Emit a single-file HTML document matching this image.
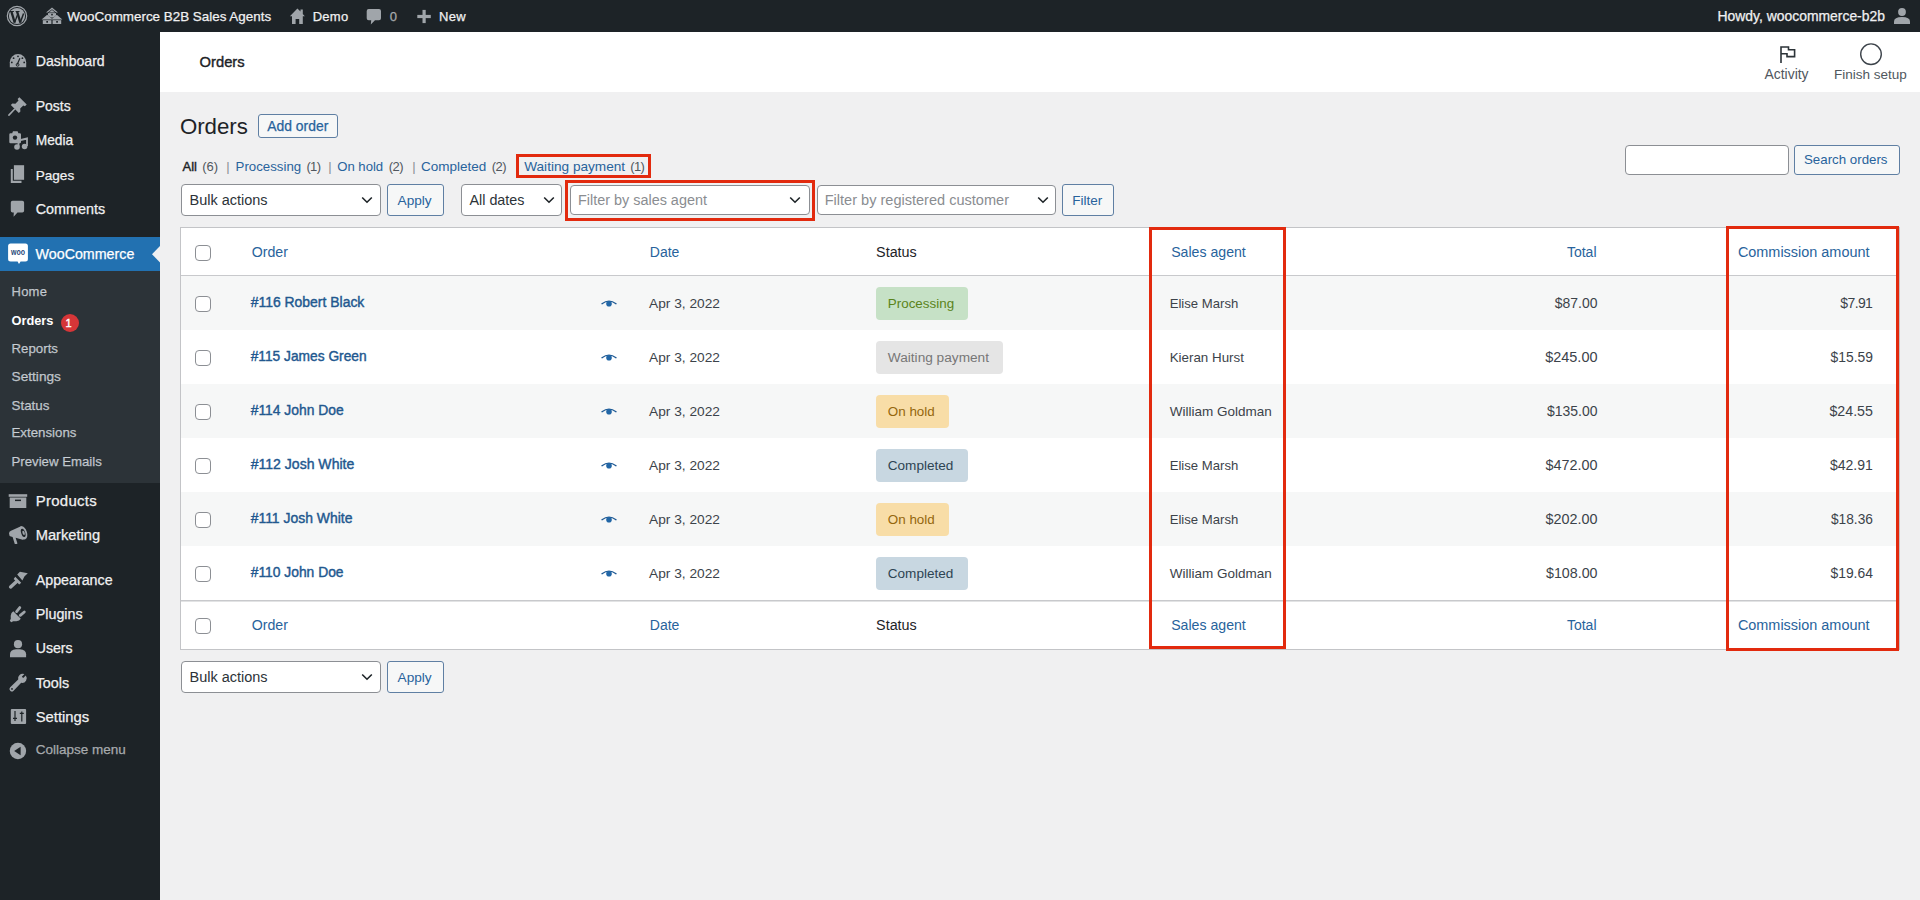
<!DOCTYPE html>
<html><head><meta charset="utf-8"><title>Orders</title>
<style>
html,body{margin:0;padding:0;width:1920px;height:900px;overflow:hidden;background:#f0f0f1;font-family:"Liberation Sans", sans-serif;}
.t{position:absolute;white-space:nowrap;}
svg{position:absolute;}
</style></head><body>
<div style="position:absolute;left:0px;top:0px;width:1920px;height:32px;background:#1d2327"></div>
<div style="position:absolute;left:0px;top:32px;width:160px;height:868px;background:#1d2327"></div>
<div style="position:absolute;left:160px;top:32px;width:1760px;height:60px;background:#fff"></div>
<div style="position:absolute;left:0px;top:237px;width:160px;height:34px;background:#2271b1"></div>
<div style="position:absolute;left:0px;top:271px;width:160px;height:212px;background:#2c3338"></div>
<div style="position:absolute;left:258px;top:114px;width:80px;height:24px;box-sizing:border-box;border:1px solid #5f7fa3;border-radius:3px;background:#f6f7f7"></div>
<div style="position:absolute;left:1625px;top:145px;width:164px;height:30px;box-sizing:border-box;border:1px solid #8c8f94;border-radius:4px;background:#fff"></div>
<div style="position:absolute;left:1794px;top:145px;width:106px;height:30px;box-sizing:border-box;border:1px solid #5f7fa3;border-radius:3px;background:#f6f7f7"></div>
<div style="position:absolute;left:181px;top:184px;width:200px;height:32px;box-sizing:border-box;border:1px solid #8c8f94;border-radius:4px;background:#fff"></div>
<svg style="left:361px;top:196.0px" width="12" height="8" viewBox="0 0 12 8"><path d="M1.2 1.5 L6 6.2 L10.8 1.5" fill="none" stroke="#1d2327" stroke-width="1.6"/></svg>
<div style="position:absolute;left:387px;top:184px;width:57px;height:32px;box-sizing:border-box;border:1px solid #5f7fa3;border-radius:3px;background:#f6f7f7"></div>
<div style="position:absolute;left:461px;top:184px;width:101px;height:32px;box-sizing:border-box;border:1px solid #8c8f94;border-radius:4px;background:#fff"></div>
<svg style="left:542.5px;top:196.0px" width="12" height="8" viewBox="0 0 12 8"><path d="M1.2 1.5 L6 6.2 L10.8 1.5" fill="none" stroke="#1d2327" stroke-width="1.6"/></svg>
<div style="position:absolute;left:570px;top:185px;width:240px;height:30px;box-sizing:border-box;border:1px solid #8c8f94;border-radius:4px;background:#fff"></div>
<svg style="left:789px;top:196.0px" width="12" height="8" viewBox="0 0 12 8"><path d="M1.2 1.5 L6 6.2 L10.8 1.5" fill="none" stroke="#1d2327" stroke-width="1.6"/></svg>
<div style="position:absolute;left:817px;top:185px;width:239px;height:30px;box-sizing:border-box;border:1px solid #8c8f94;border-radius:4px;background:#fff"></div>
<svg style="left:1036.5px;top:196.0px" width="12" height="8" viewBox="0 0 12 8"><path d="M1.2 1.5 L6 6.2 L10.8 1.5" fill="none" stroke="#1d2327" stroke-width="1.6"/></svg>
<div style="position:absolute;left:1062px;top:184px;width:52px;height:32px;box-sizing:border-box;border:1px solid #5f7fa3;border-radius:3px;background:#f6f7f7"></div>
<div style="position:absolute;left:181px;top:661px;width:200px;height:32px;box-sizing:border-box;border:1px solid #8c8f94;border-radius:4px;background:#fff"></div>
<svg style="left:361px;top:673.0px" width="12" height="8" viewBox="0 0 12 8"><path d="M1.2 1.5 L6 6.2 L10.8 1.5" fill="none" stroke="#1d2327" stroke-width="1.6"/></svg>
<div style="position:absolute;left:387px;top:661px;width:57px;height:32px;box-sizing:border-box;border:1px solid #5f7fa3;border-radius:3px;background:#f6f7f7"></div>
<div style="position:absolute;left:180px;top:227px;width:1720px;height:423px;box-sizing:border-box;border:1px solid #c3c4c7;background:#fff"></div>
<div style="position:absolute;left:181px;top:275px;width:1718px;height:1px;background:#c8c9cc"></div>
<div style="position:absolute;left:181px;top:276px;width:1718px;height:1px;background:#e2e3e4"></div>
<div style="position:absolute;left:181px;top:600px;width:1718px;height:1px;background:#c8c9cc"></div>
<div style="position:absolute;left:181px;top:601px;width:1718px;height:1px;background:#e2e3e4"></div>
<div style="position:absolute;left:195px;top:245px;width:16px;height:16px;box-sizing:border-box;border:1px solid #8c8f94;border-radius:4px;background:#fff"></div>
<div style="position:absolute;left:195px;top:618px;width:16px;height:16px;box-sizing:border-box;border:1px solid #8c8f94;border-radius:4px;background:#fff"></div>
<div style="position:absolute;left:181px;top:276px;width:1718px;height:54px;background:#f6f7f7"></div>
<div style="position:absolute;left:195px;top:296px;width:16px;height:16px;box-sizing:border-box;border:1px solid #8c8f94;border-radius:4px;background:#fff"></div>
<svg style="left:600px;top:298px" width="18" height="10" viewBox="0 0 18 10"><path d="M2 5.7 Q9 0.5 16 5.7" fill="none" stroke="#1f5a94" stroke-width="1.4" stroke-linecap="round"/><circle cx="9" cy="5.7" r="2.8" fill="#2166a6"/></svg>
<div style="position:absolute;left:876px;top:287px;width:92px;height:33px;background:#c6e1c6;border-radius:4px"></div>
<div style="position:absolute;left:195px;top:350px;width:16px;height:16px;box-sizing:border-box;border:1px solid #8c8f94;border-radius:4px;background:#fff"></div>
<svg style="left:600px;top:352px" width="18" height="10" viewBox="0 0 18 10"><path d="M2 5.7 Q9 0.5 16 5.7" fill="none" stroke="#1f5a94" stroke-width="1.4" stroke-linecap="round"/><circle cx="9" cy="5.7" r="2.8" fill="#2166a6"/></svg>
<div style="position:absolute;left:876px;top:341px;width:127px;height:33px;background:#e5e5e5;border-radius:4px"></div>
<div style="position:absolute;left:181px;top:384px;width:1718px;height:54px;background:#f6f7f7"></div>
<div style="position:absolute;left:195px;top:404px;width:16px;height:16px;box-sizing:border-box;border:1px solid #8c8f94;border-radius:4px;background:#fff"></div>
<svg style="left:600px;top:406px" width="18" height="10" viewBox="0 0 18 10"><path d="M2 5.7 Q9 0.5 16 5.7" fill="none" stroke="#1f5a94" stroke-width="1.4" stroke-linecap="round"/><circle cx="9" cy="5.7" r="2.8" fill="#2166a6"/></svg>
<div style="position:absolute;left:876px;top:395px;width:73px;height:33px;background:#f8dda7;border-radius:4px"></div>
<div style="position:absolute;left:195px;top:458px;width:16px;height:16px;box-sizing:border-box;border:1px solid #8c8f94;border-radius:4px;background:#fff"></div>
<svg style="left:600px;top:460px" width="18" height="10" viewBox="0 0 18 10"><path d="M2 5.7 Q9 0.5 16 5.7" fill="none" stroke="#1f5a94" stroke-width="1.4" stroke-linecap="round"/><circle cx="9" cy="5.7" r="2.8" fill="#2166a6"/></svg>
<div style="position:absolute;left:876px;top:449px;width:92px;height:33px;background:#c8d7e1;border-radius:4px"></div>
<div style="position:absolute;left:181px;top:492px;width:1718px;height:54px;background:#f6f7f7"></div>
<div style="position:absolute;left:195px;top:512px;width:16px;height:16px;box-sizing:border-box;border:1px solid #8c8f94;border-radius:4px;background:#fff"></div>
<svg style="left:600px;top:514px" width="18" height="10" viewBox="0 0 18 10"><path d="M2 5.7 Q9 0.5 16 5.7" fill="none" stroke="#1f5a94" stroke-width="1.4" stroke-linecap="round"/><circle cx="9" cy="5.7" r="2.8" fill="#2166a6"/></svg>
<div style="position:absolute;left:876px;top:503px;width:73px;height:33px;background:#f8dda7;border-radius:4px"></div>
<div style="position:absolute;left:195px;top:566px;width:16px;height:16px;box-sizing:border-box;border:1px solid #8c8f94;border-radius:4px;background:#fff"></div>
<svg style="left:600px;top:568px" width="18" height="10" viewBox="0 0 18 10"><path d="M2 5.7 Q9 0.5 16 5.7" fill="none" stroke="#1f5a94" stroke-width="1.4" stroke-linecap="round"/><circle cx="9" cy="5.7" r="2.8" fill="#2166a6"/></svg>
<div style="position:absolute;left:876px;top:557px;width:92px;height:33px;background:#c8d7e1;border-radius:4px"></div>
<svg style="left:0;top:0" width="1920" height="900" viewBox="0 0 1920 900">
<g fill="#a0a5aa">
 <!-- WP logo -->
 <circle cx="17" cy="16" r="9.7" fill="none" stroke="#a0a5aa" stroke-width="1.2"/>
 <circle cx="17" cy="16" r="8.1"/>
 <g stroke="#1d2327" fill="none" stroke-linecap="butt">
  <path d="M11.4 11.6 L14.7 22.6" stroke-width="2.3"/>
  <path d="M14.6 22.6 L17.3 15.2" stroke-width="1.3"/>
  <path d="M17.1 11.6 L20.4 22.6" stroke-width="2.3"/>
  <path d="M20.3 22.6 L23.6 13.6" stroke-width="1.5"/>
  <path d="M9.9 11.5 H13.9 M15.6 11.5 H19.5" stroke-width="1"/>
 </g>
 <!-- my sites houses -->
 <path d="M46 12.4 L52 7.6 L58 12.4 L56.2 12.4 L52 9.2 L47.8 12.4 Z"/>
 <path d="M48.8 12.4 L52 9.9 L55.2 12.4 Z"/>
 <rect x="48" y="13.1" width="8" height="4.4"/>
 <rect x="51.2" y="13.8" width="1.6" height="1.6" fill="#1d2327"/>
 <path d="M41.3 19.7 L47.2 14.7 L52 18.8 L56.8 14.7 L62.7 19.7 L62.7 22 L41.3 22 Z" fill="#1d2327"/>
 <path d="M41.6 19.5 L47.2 14.8 L52.8 19.5 Z M51.2 19.5 L56.8 14.8 L62.4 19.5 Z"/>
 <rect x="42.8" y="20.2" width="8.6" height="3.8"/>
 <rect x="52.6" y="20.2" width="8.6" height="3.8"/>
 <rect x="46.3" y="21" width="1.7" height="1.7" fill="#1d2327"/>
 <rect x="56.2" y="21" width="1.7" height="1.7" fill="#1d2327"/>
 <!-- home -->
 <path d="M289.9 16.2 L297.4 8.5 L300.5 11.6 L300.5 9.5 L302.8 9.5 L302.8 14 L304.8 16.2 L302.8 16.2 L302.8 24 L292 24 L292 16.2 Z"/>
 <rect x="295.6" y="19" width="3.6" height="5" fill="#1d2327"/>
 <!-- comment -->
 <path d="M368.7 8.9 H379 Q381 8.9 381 10.9 V18.3 Q381 20.3 379 20.3 H375 L370.8 24.5 L371.2 20.3 H368.7 Q366.7 20.3 366.7 18.3 V10.9 Q366.7 8.9 368.7 8.9 Z"/>
 <!-- plus -->
 <rect x="422.5" y="9.9" width="3.2" height="13.2"/>
 <rect x="417.3" y="14.9" width="13.5" height="3.2"/>
 <!-- user avatar -->
 <circle cx="1902" cy="12" r="3.9"/>
 <path d="M1894 24 V21.5 Q1894 17 1902 17 Q1910 17 1910 21.5 V24 Z"/>

 <!-- Dashboard -->
 <path d="M9.8 67.3 V62.2 A8.2 8.2 0 0 1 26.2 62.2 V67.3 Z"/>
 <g fill="#1d2327"><circle cx="18" cy="56.3" r="0.9"/><circle cx="13.6" cy="58.2" r="0.9"/><circle cx="22.4" cy="58.2" r="0.9"/><circle cx="11.8" cy="62.4" r="0.9"/><circle cx="24.2" cy="62.4" r="0.9"/></g>
 <path d="M17.2 64.6 L19.9 58.2" stroke="#1d2327" stroke-width="1.2"/>
 <circle cx="17.6" cy="64.8" r="1.4" fill="none" stroke="#1d2327" stroke-width="1"/>
 <!-- Posts pin -->
 <path d="M19.4 97.2 L26.7 104.5 L24.9 106.3 L23.3 105.4 L20.2 108.5 L20.4 111.5 L18.8 113.1 L10.8 105.1 L12.4 103.5 L15.4 103.7 L18.5 100.6 L17.6 99 Z"/>
 <path d="M14.5 109.3 L8.9 115.1" stroke="#a0a5aa" stroke-width="1.6" stroke-linecap="round"/>
 <!-- Media -->
 <path d="M10.5 133.2 H12.2 L13 131.2 H17.6 L18.4 133.2 H19.8 Q21 133.2 21 134.4 V142 Q21 143.2 19.8 143.2 H10.5 Q9.3 143.2 9.3 142 V134.4 Q9.3 133.2 10.5 133.2 Z"/>
 <circle cx="15" cy="137.6" r="2.2" fill="#1d2327"/>
 <path d="M18.5 146.5 V140.5 L27 138.5 V146" stroke="#a0a5aa" stroke-width="1.8" fill="none"/>
 <circle cx="17" cy="147" r="2.8"/>
 <circle cx="24.6" cy="146.5" r="2.8"/>
 <!-- Pages -->
 <path d="M10.8 169 H12.8 V180.8 H21.5 V182.9 H10.8 Z"/>
 <rect x="13.9" y="165.2" width="10.2" height="14.6"/>
 <!-- Comments -->
 <path d="M12.6 200.7 H22.3 Q24.1 200.7 24.1 202.5 V210.8 Q24.1 212.6 22.3 212.6 H17.5 L13.6 216.8 L13.8 212.6 H12.6 Q10.8 212.6 10.8 210.8 V202.5 Q10.8 200.7 12.6 200.7 Z"/>
 <!-- Products -->
 <rect x="8.7" y="494.2" width="18.5" height="2.6"/>
 <rect x="9.7" y="497.5" width="16.6" height="10.5"/>
 <rect x="15" y="499.6" width="6" height="1.5" fill="#1d2327"/>
 <!-- Marketing megaphone -->
 <path d="M9 533.5 Q9 531.3 11 530.8 L21.5 526 L23.5 540 L15.6 537.8 L17.4 543.3 Q17.5 544.1 16.6 544.1 H14.8 L12.6 537 L11 536.6 Q9 536 9 533.5 Z"/>
 <ellipse cx="23.2" cy="532.8" rx="3.8" ry="6.8" transform="rotate(-18 23.2 532.8)"/>
 <ellipse cx="23.2" cy="532.8" rx="2" ry="4.3" transform="rotate(-18 23.2 532.8)" fill="#1d2327"/>
 <ellipse cx="23.6" cy="532.8" rx="1.1" ry="2.2" transform="rotate(-18 23.6 532.8)"/>
 <!-- Appearance brush -->
 <path d="M17.2 574.6 L19.9 571.7 L27.8 573.2 L24.4 576.4 L22.4 580.4 Z"/>
 <path d="M15.3 576.8 L21.2 582.7 L19.2 584.4 L13.7 578.9 Z"/>
 <path d="M16.6 581.4 L10.6 586.9" stroke="#a0a5aa" stroke-width="3.4" stroke-linecap="round"/>
 <path d="M16.4 575.8 L22 581.4" stroke="#1d2327" stroke-width="1"/>
 <!-- Plugins -->
 <path d="M13.3 611.3 L20.8 618.8 Q19.5 621 16.3 621.3 L13.2 621.2 L11.2 622.2 L9.8 620.8 L10.8 618.8 L10.7 615.7 Q11 612.5 13.3 611.3 Z"/>
 <path d="M16.6 611.6 L19.8 607.6 M20.3 615.3 L24.3 612" stroke="#a0a5aa" stroke-width="2.8" stroke-linecap="round"/>
 <!-- Users -->
 <circle cx="18" cy="644.2" r="4.1"/>
 <path d="M10 657.2 V654.2 Q10 649.5 16 649.2 H20 Q26.1 649.5 26.1 654.2 V657.2 Z"/>
 <!-- Tools wrench -->
 <path d="M25.8 675.5 L23.2 678.1 L21.8 676.7 L24.4 674.1 A4.6 4.6 0 0 0 18.2 679.6 L10.2 687.3 A2.4 2.4 0 0 0 13.6 690.7 L21.2 682.8 A4.6 4.6 0 0 0 25.8 675.5 Z"/>
 <circle cx="12" cy="688.9" r="0.9" fill="#1d2327"/>
 <!-- Settings -->
 <rect x="10.8" y="708.9" width="15.3" height="15" rx="1"/>
 <path d="M15 711 V721 M21.8 711.5 V721.5 M13 718.3 H17 M19.8 713.3 H23.8" stroke="#1d2327" stroke-width="1.2"/>
 <!-- Collapse -->
 <circle cx="17.95" cy="751" r="8.2"/>
 <path d="M14.2 751 L20.6 746.8 V755.2 Z" fill="#1d2327"/>

 <!-- Woo logo -->
 <path d="M10.5 243.6 H25.4 Q27.9 243.6 27.9 246.1 V259.1 Q27.9 261.6 25.4 261.6 H20.6 L19 263.9 L17.6 261.6 H10.6 Q8.1 261.6 8.1 259.1 V246.1 Q8.1 243.6 10.6 243.6 Z" fill="#fff"/>
 <!-- sidebar arrow -->
 <path d="M160 246 L152 254.3 L160 262.6 Z" fill="#f0f0f1"/>

 <!-- Activity flag -->
 <path d="M1781 63 V47 H1788.5 V49.8 H1794.6 V56.6 H1787 V53.8 H1781" fill="none" stroke="#2c3338" stroke-width="1.6"/>
 <circle cx="1871" cy="54.2" r="10.3" fill="none" stroke="#3c434a" stroke-width="1.4"/>
</g>
<text x="11" y="255.4" font-family="Liberation Sans" font-size="9.6" font-weight="700" fill="#2a4a7a" textLength="14" lengthAdjust="spacingAndGlyphs">woo</text>
</svg>
<div style="position:absolute;left:60.5px;top:313.5px;width:18px;height:18px;border-radius:9px;background:#d63638"></div>
<div class="t" style="top:7.85px;left:67.2px;font-size:13.41px;line-height:17px;color:#f0f0f1;font-weight:400;-webkit-text-stroke:0.25px #f0f0f1">WooCommerce B2B Sales Agents</div>
<div class="t" style="top:8.50px;left:312.7px;font-size:13.0px;line-height:16px;color:#f0f0f1;font-weight:400;-webkit-text-stroke:0.25px #f0f0f1;letter-spacing:0.271px">Demo</div>
<div class="t" style="top:8.50px;left:389.8px;font-size:13.0px;line-height:16px;color:#a7aaad;font-weight:400;-webkit-text-stroke:0.25px #a7aaad">0</div>
<div class="t" style="top:8.50px;left:439.09999999999997px;font-size:13.0px;line-height:16px;color:#f0f0f1;font-weight:400;-webkit-text-stroke:0.25px #f0f0f1;letter-spacing:0.292px">New</div>
<div class="t" style="top:7.68px;left:1717.5px;font-size:13.91px;line-height:17px;color:#f0f0f1;font-weight:400;-webkit-text-stroke:0.25px #f0f0f1">Howdy, woocommerce-b2b</div>
<div class="t" style="top:52.81px;left:35.7px;font-size:14.12px;line-height:17px;color:#f0f0f1;font-weight:400;-webkit-text-stroke:0.25px #f0f0f1">Dashboard</div>
<div class="t" style="top:98.05px;left:35.7px;font-size:13.99px;line-height:17px;color:#f0f0f1;font-weight:400;-webkit-text-stroke:0.25px #f0f0f1">Posts</div>
<div class="t" style="top:132.33px;left:35.7px;font-size:13.76px;line-height:17px;color:#f0f0f1;font-weight:400;-webkit-text-stroke:0.25px #f0f0f1">Media</div>
<div class="t" style="top:166.59px;left:35.7px;font-size:13.58px;line-height:17px;color:#f0f0f1;font-weight:400;-webkit-text-stroke:0.25px #f0f0f1">Pages</div>
<div class="t" style="top:200.42px;left:35.7px;font-size:14.37px;line-height:18px;color:#f0f0f1;font-weight:400;-webkit-text-stroke:0.25px #f0f0f1">Comments</div>
<div class="t" style="top:244.56px;left:35.6px;font-size:14.26px;line-height:18px;color:#fff;font-weight:400;-webkit-text-stroke:0.25px #fff">WooCommerce</div>
<div class="t" style="top:284.40px;left:11.5px;font-size:13.0px;line-height:16px;color:rgba(240,246,252,.7);font-weight:400;-webkit-text-stroke:0.25px rgba(240,246,252,.7);letter-spacing:0.237px">Home</div>
<div class="t" style="top:312.66px;left:11.5px;font-size:12.8px;line-height:16px;color:#fff;font-weight:700">Orders</div>
<div class="t" style="top:340.70px;left:11.5px;font-size:13.28px;line-height:16px;color:rgba(240,246,252,.7);font-weight:400;-webkit-text-stroke:0.25px rgba(240,246,252,.7)">Reports</div>
<div class="t" style="top:368.25px;left:11.5px;font-size:13.7px;line-height:17px;color:rgba(240,246,252,.7);font-weight:400;-webkit-text-stroke:0.25px rgba(240,246,252,.7)">Settings</div>
<div class="t" style="top:396.56px;left:11.5px;font-size:13.4px;line-height:17px;color:rgba(240,246,252,.7);font-weight:400;-webkit-text-stroke:0.25px rgba(240,246,252,.7)">Status</div>
<div class="t" style="top:425.30px;left:11.5px;font-size:13.29px;line-height:16px;color:rgba(240,246,252,.7);font-weight:400;-webkit-text-stroke:0.25px rgba(240,246,252,.7)">Extensions</div>
<div class="t" style="top:453.52px;left:11.5px;font-size:13.23px;line-height:16px;color:rgba(240,246,252,.7);font-weight:400;-webkit-text-stroke:0.25px rgba(240,246,252,.7)">Preview Emails</div>
<div class="t" style="top:491.61px;left:35.7px;font-size:14.98px;line-height:18px;color:#f0f0f1;font-weight:400;-webkit-text-stroke:0.25px #f0f0f1;letter-spacing:0.269px">Products</div>
<div class="t" style="top:525.51px;left:35.7px;font-size:14.69px;line-height:18px;color:#f0f0f1;font-weight:400;-webkit-text-stroke:0.25px #f0f0f1">Marketing</div>
<div class="t" style="top:571.45px;left:35.7px;font-size:14.28px;line-height:18px;color:#f0f0f1;font-weight:400;-webkit-text-stroke:0.25px #f0f0f1">Appearance</div>
<div class="t" style="top:605.23px;left:35.7px;font-size:14.33px;line-height:18px;color:#f0f0f1;font-weight:400;-webkit-text-stroke:0.25px #f0f0f1">Plugins</div>
<div class="t" style="top:639.49px;left:35.7px;font-size:14.17px;line-height:18px;color:#f0f0f1;font-weight:400;-webkit-text-stroke:0.25px #f0f0f1">Users</div>
<div class="t" style="top:673.93px;left:35.7px;font-size:14.35px;line-height:18px;color:#f0f0f1;font-weight:400;-webkit-text-stroke:0.25px #f0f0f1">Tools</div>
<div class="t" style="top:707.57px;left:35.7px;font-size:14.8px;line-height:18px;color:#f0f0f1;font-weight:400;-webkit-text-stroke:0.25px #f0f0f1">Settings</div>
<div class="t" style="top:741.43px;left:35.7px;font-size:13.49px;line-height:17px;color:#a7aaad;font-weight:400;-webkit-text-stroke:0.25px #a7aaad">Collapse menu</div>
<div class="t" style="top:52.60px;left:199.6px;font-size:14.72px;line-height:18px;color:#1d2327;font-weight:400;-webkit-text-stroke:0.4px #1d2327">Orders</div>
<div class="t" style="top:65.58px;left:1764.5px;font-size:13.91px;line-height:17px;color:#50575e;font-weight:400">Activity</div>
<div class="t" style="top:65.72px;left:1833.9px;font-size:13.52px;line-height:17px;color:#50575e;font-weight:400">Finish setup</div>
<div class="t" style="top:112.79px;left:179.89999999999998px;font-size:22.25px;line-height:27px;color:#1d2327;font-weight:400">Orders</div>
<div class="t" style="top:118.18px;left:267.2px;font-size:13.91px;line-height:17px;color:#28639c;font-weight:400;-webkit-text-stroke:0.25px #28639c">Add order</div>
<div class="t" style="top:159.00px;left:182.5px;font-size:13.0px;line-height:16px;color:#1d2327;font-weight:400;-webkit-text-stroke:0.4px #1d2327">All</div>
<div class="t" style="top:159.00px;left:202.2px;font-size:13.0px;line-height:16px;color:#50575e;font-weight:400">(6)</div>
<div class="t" style="top:159.00px;left:226.2px;font-size:13px;line-height:16px;color:#8c8f94;font-weight:400">|</div>
<div class="t" style="top:158.91px;left:235.6px;font-size:13.26px;line-height:16px;color:#28639c;font-weight:400">Processing</div>
<div class="t" style="top:159.00px;left:306.4px;font-size:13.0px;line-height:16px;color:#50575e;font-weight:400;letter-spacing:-0.6px">(1)</div>
<div class="t" style="top:159.00px;left:328.2px;font-size:13px;line-height:16px;color:#8c8f94;font-weight:400">|</div>
<div class="t" style="top:158.95px;left:337.2px;font-size:13.13px;line-height:16px;color:#28639c;font-weight:400">On hold</div>
<div class="t" style="top:159.00px;left:388.7px;font-size:13.0px;line-height:16px;color:#50575e;font-weight:400;letter-spacing:-0.495px">(2)</div>
<div class="t" style="top:159.00px;left:412.2px;font-size:13px;line-height:16px;color:#8c8f94;font-weight:400">|</div>
<div class="t" style="top:158.32px;left:421.09999999999997px;font-size:13.5px;line-height:17px;color:#28639c;font-weight:400">Completed</div>
<div class="t" style="top:159.00px;left:491.7px;font-size:13.0px;line-height:16px;color:#50575e;font-weight:400;letter-spacing:-0.495px">(2)</div>
<div class="t" style="top:158.28px;left:524.2px;font-size:13.63px;line-height:17px;color:#28639c;font-weight:400">Waiting payment</div>
<div class="t" style="top:159.00px;left:630.2px;font-size:13.0px;line-height:16px;color:#50575e;font-weight:400;letter-spacing:-0.6px">(1)</div>
<div class="t" style="top:152.49px;left:1804.0px;font-size:13.31px;line-height:16px;color:#28639c;font-weight:400">Search orders</div>
<div class="t" style="top:190.99px;left:189.5px;font-size:14.47px;line-height:18px;color:#2c3338;font-weight:400">Bulk actions</div>
<div class="t" style="top:191.78px;left:397.59999999999997px;font-size:13.63px;line-height:17px;color:#28639c;font-weight:400">Apply</div>
<div class="t" style="top:191.03px;left:469.5px;font-size:14.34px;line-height:18px;color:#2c3338;font-weight:400">All dates</div>
<div class="t" style="top:191.01px;left:578.0px;font-size:14.41px;line-height:18px;color:#8a8d91;font-weight:400">Filter by sales agent</div>
<div class="t" style="top:190.96px;left:824.7px;font-size:14.55px;line-height:18px;color:#8a8d91;font-weight:400">Filter by registered customer</div>
<div class="t" style="top:191.82px;left:1072.2px;font-size:13.5px;line-height:17px;color:#28639c;font-weight:400">Filter</div>
<div class="t" style="top:667.89px;left:189.5px;font-size:14.47px;line-height:18px;color:#2c3338;font-weight:400">Bulk actions</div>
<div class="t" style="top:668.78px;left:397.59999999999997px;font-size:13.63px;line-height:17px;color:#28639c;font-weight:400">Apply</div>
<div class="t" style="top:243.09px;left:251.7px;font-size:14.18px;line-height:18px;color:#28639c;font-weight:400">Order</div>
<div class="t" style="top:243.65px;left:649.8000000000001px;font-size:14.0px;line-height:17px;color:#28639c;font-weight:400">Date</div>
<div class="t" style="top:243.03px;left:876.1px;font-size:14.35px;line-height:18px;color:#1d2327;font-weight:400">Status</div>
<div class="t" style="top:243.60px;left:1171.2px;font-size:14.14px;line-height:17px;color:#28639c;font-weight:400">Sales agent</div>
<div class="t" style="top:243.65px;right:323.50px;font-size:14px;line-height:17px;color:#28639c;font-weight:400">Total</div>
<div class="t" style="top:243.00px;left:1737.9px;font-size:14.44px;line-height:18px;color:#28639c;font-weight:400">Commission amount</div>
<div class="t" style="top:616.09px;left:251.7px;font-size:14.18px;line-height:18px;color:#28639c;font-weight:400">Order</div>
<div class="t" style="top:616.65px;left:649.8000000000001px;font-size:14.0px;line-height:17px;color:#28639c;font-weight:400">Date</div>
<div class="t" style="top:616.03px;left:876.1px;font-size:14.35px;line-height:18px;color:#1d2327;font-weight:400">Status</div>
<div class="t" style="top:616.60px;left:1171.2px;font-size:14.14px;line-height:17px;color:#28639c;font-weight:400">Sales agent</div>
<div class="t" style="top:616.65px;right:323.50px;font-size:14px;line-height:17px;color:#28639c;font-weight:400">Total</div>
<div class="t" style="top:616.00px;left:1737.9px;font-size:14.44px;line-height:18px;color:#28639c;font-weight:400">Commission amount</div>
<div class="t" style="top:293.97px;left:250.7px;font-size:13.95px;line-height:17px;color:#22588f;font-weight:400;-webkit-text-stroke:0.4px #22588f">#116 Robert Black</div>
<div class="t" style="top:295.06px;left:649.1px;font-size:13.69px;line-height:17px;color:#3c434a;font-weight:400">Apr 3, 2022</div>
<div class="t" style="top:295.15px;left:887.8000000000001px;font-size:13.42px;line-height:17px;color:#5b841b;font-weight:400">Processing</div>
<div class="t" style="top:295.74px;left:1169.7px;font-size:13.15px;line-height:16px;color:#3c434a;font-weight:400">Elise Marsh</div>
<div class="t" style="top:294.96px;right:322.50px;font-size:13.96px;line-height:17px;color:#3c434a;font-weight:400">$87.00</div>
<div class="t" style="top:294.95px;right:47.70px;font-size:14.0px;line-height:17px;color:#3c434a;font-weight:400;letter-spacing:-0.6px">$7.91</div>
<div class="t" style="top:348.03px;left:250.7px;font-size:13.76px;line-height:17px;color:#22588f;font-weight:400;-webkit-text-stroke:0.4px #22588f">#115 James Green</div>
<div class="t" style="top:349.06px;left:649.1px;font-size:13.69px;line-height:17px;color:#3c434a;font-weight:400">Apr 3, 2022</div>
<div class="t" style="top:349.07px;left:887.8000000000001px;font-size:13.66px;line-height:17px;color:#777777;font-weight:400">Waiting payment</div>
<div class="t" style="top:349.17px;left:1169.7px;font-size:13.37px;line-height:17px;color:#3c434a;font-weight:400">Kieran Hurst</div>
<div class="t" style="top:348.29px;right:322.50px;font-size:14.47px;line-height:18px;color:#3c434a;font-weight:400">$245.00</div>
<div class="t" style="top:349.00px;right:47.10px;font-size:13.86px;line-height:17px;color:#3c434a;font-weight:400">$15.59</div>
<div class="t" style="top:402.00px;left:250.7px;font-size:13.86px;line-height:17px;color:#22588f;font-weight:400;-webkit-text-stroke:0.4px #22588f">#114 John Doe</div>
<div class="t" style="top:403.06px;left:649.1px;font-size:13.69px;line-height:17px;color:#3c434a;font-weight:400">Apr 3, 2022</div>
<div class="t" style="top:403.15px;left:887.8000000000001px;font-size:13.41px;line-height:17px;color:#94660c;font-weight:400">On hold</div>
<div class="t" style="top:403.12px;left:1169.7px;font-size:13.5px;line-height:17px;color:#3c434a;font-weight:400">William Goldman</div>
<div class="t" style="top:402.96px;right:322.50px;font-size:13.97px;line-height:17px;color:#3c434a;font-weight:400">$135.00</div>
<div class="t" style="top:402.37px;right:47.10px;font-size:14.22px;line-height:18px;color:#3c434a;font-weight:400">$24.55</div>
<div class="t" style="top:455.93px;left:250.7px;font-size:14.05px;line-height:17px;color:#22588f;font-weight:400;-webkit-text-stroke:0.4px #22588f">#112 Josh White</div>
<div class="t" style="top:457.06px;left:649.1px;font-size:13.69px;line-height:17px;color:#3c434a;font-weight:400">Apr 3, 2022</div>
<div class="t" style="top:457.10px;left:887.8000000000001px;font-size:13.56px;line-height:17px;color:#2e4453;font-weight:400">Completed</div>
<div class="t" style="top:457.74px;left:1169.7px;font-size:13.15px;line-height:16px;color:#3c434a;font-weight:400">Elise Marsh</div>
<div class="t" style="top:456.32px;right:322.50px;font-size:14.38px;line-height:18px;color:#3c434a;font-weight:400">$472.00</div>
<div class="t" style="top:456.93px;right:47.10px;font-size:14.06px;line-height:17px;color:#3c434a;font-weight:400">$42.91</div>
<div class="t" style="top:509.97px;left:250.7px;font-size:13.94px;line-height:17px;color:#22588f;font-weight:400;-webkit-text-stroke:0.4px #22588f">#111 Josh White</div>
<div class="t" style="top:511.06px;left:649.1px;font-size:13.69px;line-height:17px;color:#3c434a;font-weight:400">Apr 3, 2022</div>
<div class="t" style="top:511.15px;left:887.8000000000001px;font-size:13.41px;line-height:17px;color:#94660c;font-weight:400">On hold</div>
<div class="t" style="top:511.74px;left:1169.7px;font-size:13.15px;line-height:16px;color:#3c434a;font-weight:400">Elise Marsh</div>
<div class="t" style="top:510.32px;right:322.50px;font-size:14.38px;line-height:18px;color:#3c434a;font-weight:400">$202.00</div>
<div class="t" style="top:511.04px;right:47.10px;font-size:13.73px;line-height:17px;color:#3c434a;font-weight:400">$18.36</div>
<div class="t" style="top:564.00px;left:250.7px;font-size:13.85px;line-height:17px;color:#22588f;font-weight:400;-webkit-text-stroke:0.4px #22588f">#110 John Doe</div>
<div class="t" style="top:565.06px;left:649.1px;font-size:13.69px;line-height:17px;color:#3c434a;font-weight:400">Apr 3, 2022</div>
<div class="t" style="top:565.10px;left:887.8000000000001px;font-size:13.56px;line-height:17px;color:#2e4453;font-weight:400">Completed</div>
<div class="t" style="top:565.12px;left:1169.7px;font-size:13.5px;line-height:17px;color:#3c434a;font-weight:400">William Goldman</div>
<div class="t" style="top:564.36px;right:322.50px;font-size:14.25px;line-height:18px;color:#3c434a;font-weight:400">$108.00</div>
<div class="t" style="top:564.99px;right:47.10px;font-size:13.89px;line-height:17px;color:#3c434a;font-weight:400">$19.64</div>
<div class="t" style="top:316.19px;left:65.5px;font-size:11.0px;line-height:14px;color:#fff;font-weight:400;-webkit-text-stroke:0.4px #fff">1</div>
<div style="position:absolute;left:516px;top:154px;width:135px;height:24px;box-sizing:border-box;border:3px solid #e22a0e"></div>
<div style="position:absolute;left:565px;top:180px;width:250px;height:41px;box-sizing:border-box;border:3px solid #e22a0e"></div>
<div style="position:absolute;left:1149px;top:227px;width:137px;height:422px;box-sizing:border-box;border:3px solid #e22a0e"></div>
<div style="position:absolute;left:1726px;top:226px;width:173px;height:425px;box-sizing:border-box;border:3px solid #e22a0e"></div>
</body></html>
